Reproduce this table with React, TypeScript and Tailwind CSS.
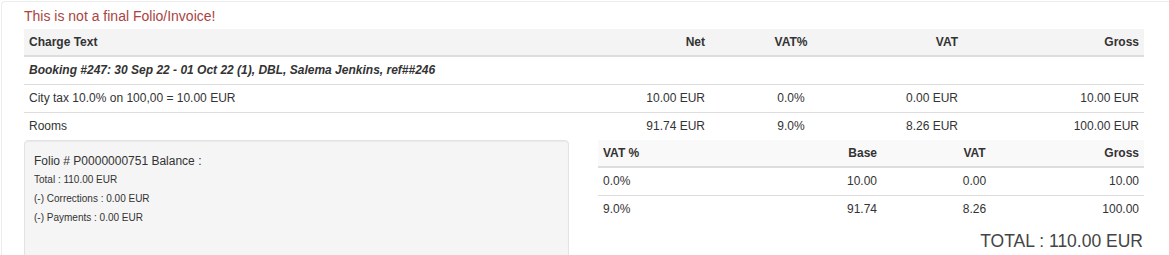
const charges = [
  { text: "City tax 10.0% on 100,00 = 10.00 EUR", net: "10.00 EUR", rate: "0.0%", vat: "0.00 EUR", gross: "10.00 EUR" },
  { text: "Rooms", net: "91.74 EUR", rate: "9.0%", vat: "8.26 EUR", gross: "100.00 EUR" },
];

const vatLines = [
  { rate: "0.0%", base: "10.00", vat: "0.00", gross: "10.00" },
  { rate: "9.0%", base: "91.74", vat: "8.26", gross: "100.00" },
];

const chargeCols = "grid grid-cols-[536px_150px_162px_91px_181px]";
const vatCols = "grid grid-cols-[172px_112px_185px_77px]";

export default function App() {
  return (
    <div className="h-[255px] overflow-hidden bg-white font-['Liberation_Sans',Arial,sans-serif] text-[12px] text-[#333]">
      <div className="ml-px mt-px h-full rounded-tl-[4px] border-l border-t border-[#ececec] pl-[22px] pr-[24px]">
        <div className="pt-[4px] text-[14px] leading-[20px] text-[#a94442]">
          This is not a final Folio/Invoice!
        </div>

        <div className="mt-[3px] w-[1120px]">
          <div className={`${chargeCols} h-[28px] items-center border-b-2 border-[#ddd] bg-[#f4f4f4] font-bold`}>
            <div className="px-[5px]">Charge Text</div>
            <div className="px-[5px] text-right">Net</div>
            <div className="px-[5px] text-center">VAT%</div>
            <div className="px-[5px] text-right">VAT</div>
            <div className="px-[5px] text-right">Gross</div>
          </div>

          <div className="flex h-[27px] items-center px-[5px] pb-[1px] font-bold italic">
            Booking #247: 30 Sep 22 - 01 Oct 22 (1), DBL, Salema Jenkins, ref##246
          </div>

          {charges.map((c) => (
            <div
              key={c.text}
              className={`${chargeCols} h-[28px] items-center border-t border-[#ddd] pb-[2px]`}
            >
              <div className="px-[5px]">{c.text}</div>
              <div className="px-[5px] text-right">{c.net}</div>
              <div className="px-[5px] text-center">{c.rate}</div>
              <div className="px-[5px] text-right">{c.vat}</div>
              <div className="px-[5px] text-right">{c.gross}</div>
            </div>
          ))}
        </div>

        <div className="flex w-[1120px] items-start">
          <div className="h-[140px] w-[545px] rounded-[4px] border border-[#e3e3e3] bg-[#f5f5f5] px-[9px] pt-[12px] shadow-[inset_0_1px_1px_rgba(0,0,0,0.05)]">
            <div className="leading-[17px]">Folio # P0000000751 Balance :</div>
            <div className="text-[10px] leading-[19px]">Total : 110.00 EUR</div>
            <div className="text-[10px] leading-[19px]">(-) Corrections : 0.00 EUR</div>
            <div className="text-[10px] leading-[19px]">(-) Payments : 0.00 EUR</div>
          </div>

          <div className="ml-auto w-[546px]">
            <div className={`${vatCols} h-[28px] items-center border-b-2 border-[#ddd] bg-[#f9f9f9] font-bold`}>
              <div className="px-[5px]">VAT %</div>
              <div className="px-[5px] text-right">Base</div>
              <div className="px-[5px] text-center">VAT</div>
              <div className="px-[5px] text-right">Gross</div>
            </div>
            {vatLines.map((v, i) => (
              <div
                key={v.rate}
                className={`${vatCols} items-center pb-[2px] ${i > 0 ? "h-[28px] border-t border-[#ddd]" : "h-[27px]"}`}
              >
                <div className="px-[5px]">{v.rate}</div>
                <div className="px-[5px] text-right">{v.base}</div>
                <div className="px-[5px] text-center">{v.vat}</div>
                <div className="px-[5px] text-right">{v.gross}</div>
              </div>
            ))}
            <div className="mt-[8px] pr-[1px] text-right text-[17.5px] leading-[20px] text-[#444]">
              TOTAL : 110.00 EUR
            </div>
          </div>
        </div>
      </div>
    </div>
  );
}
